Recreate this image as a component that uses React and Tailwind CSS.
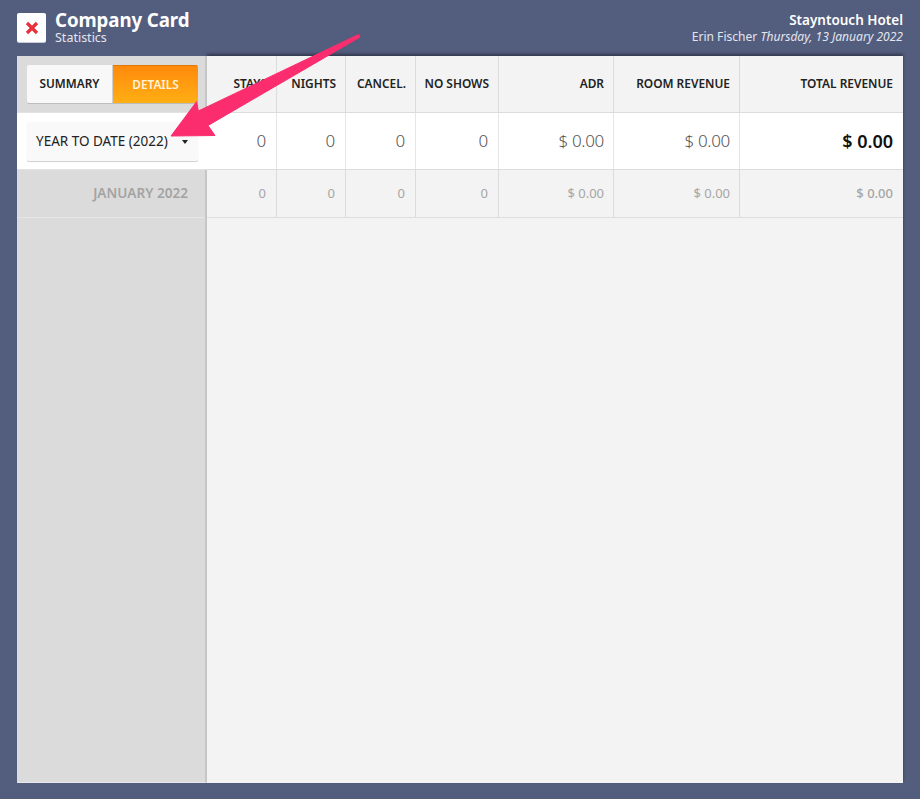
const font = { fontFamily: '"Noto Sans", sans-serif' };

const cols = [
  { label: 'STAYS', w: 'w-[70px]', money: false },
  { label: 'NIGHTS', w: 'w-[69px]', money: false },
  { label: 'CANCEL.', w: 'w-[70px]', money: false },
  { label: 'NO SHOWS', w: 'w-[83px]', money: false },
  { label: 'ADR', w: 'w-[115px]', money: true },
  { label: 'ROOM REVENUE', w: 'w-[126px]', money: true },
  { label: 'TOTAL REVENUE', w: 'flex-1', money: true, last: true },
];

function Arrow() {
  return (
    <svg className="absolute left-0 top-0 z-20 pointer-events-none" width="920" height="799" viewBox="0 0 920 799">
      <polygon
        points="358.5,34.5 360,37 208,125.5 215,135.5 171,136 196.7,101.5 198.3,111"
        fill="#fb2d6e"
        stroke="#fb2d6e"
        strokeWidth="1"
        strokeLinejoin="round"
      />
    </svg>
  );
}

export default function App() {
  return (
    <div style={font} className="relative w-[920px] h-[799px] bg-[#535d7e] px-[17px] overflow-hidden flex flex-col">
      <header className="h-[56px] flex items-start justify-between shrink-0">
        <div className="flex items-start">
          <div className="mt-[13px] w-[29px] h-[29px] bg-white rounded-[2px] flex items-center justify-center shadow-[0_1px_0_#c8ccd6]">
            <svg width="14" height="14" viewBox="0 0 14 14">
              <path d="M2 2 L12 12 M12 2 L2 12" stroke="#e8303a" strokeWidth="3.2" />
            </svg>
          </div>
          <div className="ml-[9px] mt-[9px]">
            <div className="text-[18.7px] leading-[22px] font-bold text-white tracking-[-0.1px] whitespace-nowrap">Company Card</div>
            <div className="text-[12.5px] leading-[13px] text-[#e3e6ee]">Statistics</div>
          </div>
        </div>
        <div className="text-right mt-[11px]">
          <div className="text-[13.5px] leading-[18px] font-semibold text-white">Stayntouch Hotel</div>
          <div className="text-[12.05px] leading-[15px] text-[#e3e6ee]">
            Erin Fischer <span className="italic">Thursday, 13 January 2022</span>
          </div>
        </div>
      </header>

      <main className="h-[727px] flex bg-[#f3f3f3]">
        <aside className="relative z-10 w-[190px] shrink-0 bg-[#dbdbdb] border-r-2 border-[#c6c6c6] border-b border-b-[#e8e8e8] flex flex-col">
          <div className="h-[57px] border-b border-[#e2e2e2] pt-[9px] pl-[10px] shrink-0">
            <div className="flex w-[171px] h-[38px] rounded-[2px] shadow-[0_1px_0_#bdbdbd] overflow-hidden text-[11.8px] font-semibold">
              <div className="w-[86px] bg-[#f8f8f8] text-[#222] flex items-center justify-center border-r border-[#cfcfcf]">SUMMARY</div>
              <div className="flex-1 bg-gradient-to-b from-[#ff8a0c] to-[#ffae14] border-t border-[#e07a06] text-[#fff3d8] flex items-center justify-center">DETAILS</div>
            </div>
          </div>
          <div className="h-[57px] bg-white border-b border-[#e2e2e2] pt-[9px] pl-[10px] shrink-0 -mr-[2px] relative">
            <div className="w-[171px] h-[39px] bg-[#f9f9f9] rounded-[2px] shadow-[0_1px_1px_#cfcfcf] flex items-center pl-[9px] pr-[10px] justify-between text-[13.5px] text-[#222] whitespace-nowrap">
              <span>YEAR TO DATE (2022)</span>
              <span className="w-0 h-0 border-l-[3px] border-r-[3px] border-t-[4px] border-l-transparent border-r-transparent border-t-[#222]" />
            </div>
          </div>
          <div className="h-[48px] border-b border-[#e6e6e6] flex items-center justify-end pr-[17px] text-[13.6px] font-semibold text-[#a3a3a3] shrink-0">
            JANUARY 2022
          </div>
        </aside>

        <section className="flex-1 flex flex-col min-w-0 shadow-[0_-2px_3px_rgba(0,0,0,0.4)]">
          <div className="flex h-[57px] border-b border-[#dcdcdc] shrink-0">
            {cols.map((c) => (
              <div key={c.label} className={`${c.w} ${c.last ? 'pr-[10px]' : 'border-r border-[#dcdcdc] pr-[9px]'} flex items-center justify-end text-[11.9px] font-semibold text-[#222] whitespace-nowrap`}>
                {c.label}
              </div>
            ))}
          </div>
          <div className="flex h-[57px] bg-white border-b border-[#dcdcdc] shrink-0">
            {cols.map((c) => (
              <div key={c.label} className={`${c.w} ${c.last ? 'font-semibold text-[#111] text-[18px] pr-[10px]' : c.money ? 'font-light text-[#555] text-[17px] tracking-[-0.3px] border-r border-[#e6e6e6] pr-[9px]' : 'font-light text-[#555] text-[17px] tracking-[-0.3px] border-r border-[#e6e6e6] pr-[10px]'} flex items-center justify-end`}>
                {c.money ? '$ 0.00' : '0'}
              </div>
            ))}
          </div>
          <div className="flex h-[48px] border-b border-[#dedede] shrink-0">
            {cols.map((c) => (
              <div key={c.label} className={`${c.w} ${c.last ? 'font-medium pr-[10px]' : c.money ? 'border-r border-[#dcdcdc] pr-[9px]' : 'border-r border-[#dcdcdc] pr-[10px]'} flex items-center justify-end text-[13px] text-[#a6a6a6]`}>
                {c.money ? '$ 0.00' : '0'}
              </div>
            ))}
          </div>
        </section>
      </main>
      <Arrow />
    </div>
  );
}
